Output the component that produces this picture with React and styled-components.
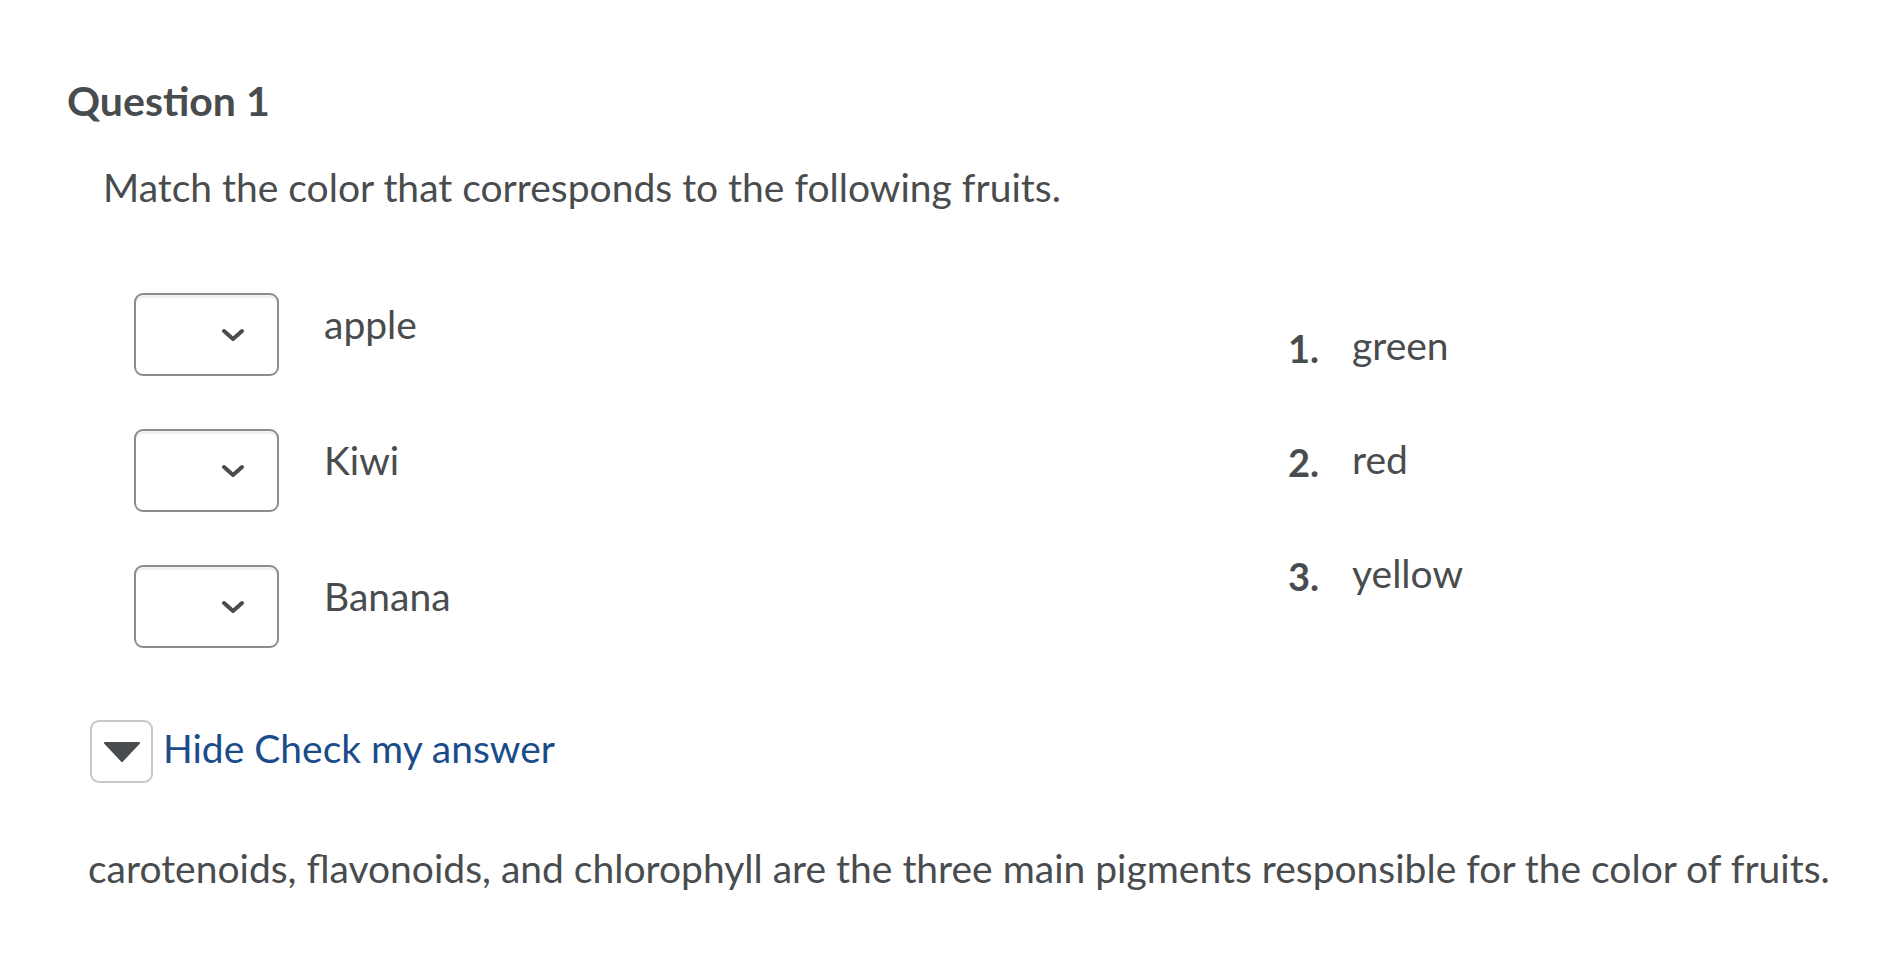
import React from 'react';
import styled, { createGlobalStyle } from 'styled-components';

const GlobalStyle = createGlobalStyle`
  html, body {
    margin: 0;
    padding: 0;
    background: #fff;
  }
  body {
    font-family: Lato, "Open Sans", "Liberation Sans", sans-serif;
    color: #494c4e;
  }
`;

const Page = styled.div`
  padding: 76px 0 0 67px;
`;

const Heading = styled.h2`
  margin: 0;
  font-size: 41px;
  font-weight: 700;
  line-height: 49px;
`;

const Prompt = styled.p`
  margin: 39px 0 0 36px;
  font-size: 39px;
  line-height: 47px;
`;

const MatchArea = styled.div`
  display: flex;
  margin: 82px 0 0 67px;
`;

const ChoiceColumn = styled.div`
  display: flex;
  flex-direction: column;
  gap: 53px;
  width: 1154px;
`;

const ChoiceRow = styled.div`
  display: flex;
  align-items: flex-start;
  gap: 45px;
`;

const SelectBox = styled.div`
  box-sizing: border-box;
  width: 145px;
  height: 83px;
  border: 2px solid #898d90;
  border-radius: 9px;
  box-shadow: inset 0 3px 0 0 #f1f2f4;
  display: flex;
  align-items: center;
  justify-content: flex-end;
  padding-right: 32px;
`;

const ChoiceLabel = styled.span`
  font-size: 39px;
  line-height: 47px;
  padding-top: 8px;
`;

const AnswerList = styled.ol`
  list-style: none;
  margin: 0;
  padding: 29px 0 0;
  display: flex;
  flex-direction: column;
  gap: 67px;
`;

const AnswerItem = styled.li`
  display: flex;
  align-items: flex-start;
  font-size: 39px;
  line-height: 47px;
`;

const AnswerNumber = styled.span`
  width: 64px;
  font-weight: 700;
  font-size: 38px;
  line-height: 42px;
  padding-top: 5px;
`;

const HintRow = styled.div`
  display: flex;
  align-items: center;
  gap: 10px;
  margin: 72px 0 0 23px;
`;

const ToggleButton = styled.button`
  box-sizing: border-box;
  width: 63px;
  height: 63px;
  border: 2px solid #c4c9cc;
  border-radius: 9px;
  background: #fff;
  display: flex;
  align-items: center;
  justify-content: center;
  padding: 0;
`;

const HintLink = styled.a`
  font-size: 39px;
  line-height: 47px;
  padding-bottom: 6px;
  color: #1b4c8a;
  text-decoration: none;
`;

const Feedback = styled.p`
  margin: 62px 0 0 21px;
  font-size: 39px;
  line-height: 47px;
`;

const Chevron = () => (
  <svg width="24" height="14" viewBox="0 0 24 14">
    <path d="M3 3 L12 11 L21 3" fill="none" stroke="#494c4e" strokeWidth="4" strokeLinecap="round" strokeLinejoin="round" />
  </svg>
);

const Triangle = () => (
  <svg width="38" height="22" viewBox="0 0 38 22">
    <path d="M2 2 L36 2 L19 20 Z" fill="#494c4e" stroke="#494c4e" strokeWidth="2" strokeLinejoin="round" />
  </svg>
);

const choices = ['apple', 'Kiwi', 'Banana'];
const answers = ['green', 'red', 'yellow'];

export default function App() {
  return (
    <Page>
      <GlobalStyle />
      <Heading>Question 1</Heading>
      <Prompt>Match the color that corresponds to the following fruits.</Prompt>
      <MatchArea>
        <ChoiceColumn>
          {choices.map(c => (
            <ChoiceRow key={c}>
              <SelectBox>
                <Chevron />
              </SelectBox>
              <ChoiceLabel>{c}</ChoiceLabel>
            </ChoiceRow>
          ))}
        </ChoiceColumn>
        <AnswerList>
          {answers.map((a, i) => (
            <AnswerItem key={a}>
              <AnswerNumber>{i + 1}.</AnswerNumber>
              <span>{a}</span>
            </AnswerItem>
          ))}
        </AnswerList>
      </MatchArea>
      <HintRow>
        <ToggleButton aria-label="Hide">
          <Triangle />
        </ToggleButton>
        <HintLink href="#">Hide Check my answer</HintLink>
      </HintRow>
      <Feedback>
        carotenoids, flavonoids, and chlorophyll are the three main pigments responsible for the color of fruits.
      </Feedback>
    </Page>
  );
}
